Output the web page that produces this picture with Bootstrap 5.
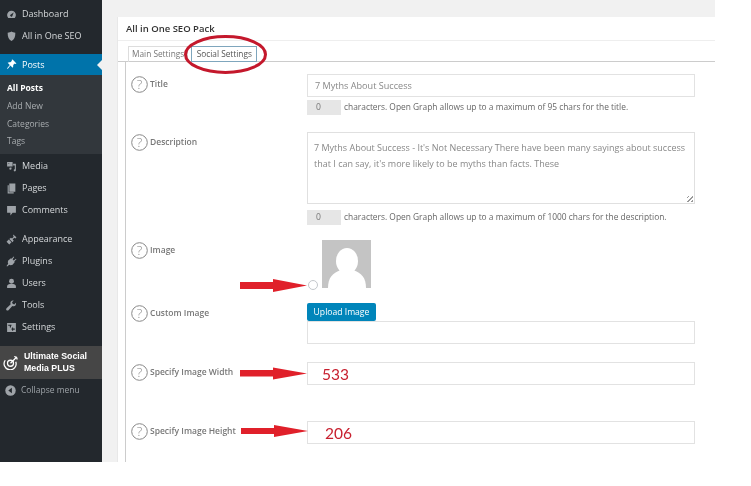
<!DOCTYPE html>
<html lang="en">
<head>
<meta charset="utf-8">
<title>All in One SEO Pack</title>
<link href="https://cdn.jsdelivr.net/npm/bootstrap@5.3.0/dist/css/bootstrap.min.css" rel="stylesheet">
<style>
html,body{margin:0;background:#fff;overflow:hidden}
body{font-family:"Open Sans",sans-serif;color:#555}
.shot{width:751px;height:486px;position:relative;background:#fff;filter:blur(.3px)}
.wpframe{width:715px;height:462px;background:#f1f1f1}
.side{width:102px;background:#23282d;padding-top:2px;flex:none}
.mitem{height:22px;display:flex;align-items:center;color:#d5d8da;font-size:9px;padding:2px 0 0 6px;gap:5px;white-space:nowrap}
.gaptop,.gaptop~.mitem{padding-top:0}
.mitem svg{width:11px;height:11px;flex:none;fill:#9ea3a8}
.mposts{background:#0073aa;color:#fff;height:21px;margin-top:8px;position:relative;padding-top:0}
.mposts svg{fill:#fff}
.mposts::after{content:"";position:absolute;right:0;top:6px;border:5px solid transparent;border-right-color:#f1f1f1;border-left:0}
.subm{background:#32373c;height:79px;padding-top:5px;margin-bottom:0}
.subi{height:17.6px;display:flex;align-items:center;padding-left:7px;font-size:8.5px;color:#a9adb0}
.subi-on{color:#fff;font-weight:700}
.gaptop{margin-top:8px}
.musm{background:#464646;height:33px;margin-top:8px;color:#fff;font:700 8.8px/11.5px "Liberation Sans",sans-serif;display:flex;align-items:center;padding-left:3px;gap:6px}
.musm svg{width:15px;height:15px;flex:none}
.mcollapse{height:22px;display:flex;align-items:center;font-size:8.5px;color:#9ea3a8;padding-left:5px;gap:5px}
.mcollapse svg{width:11px;height:11px;flex:none}
.mainc{padding:17px 0 0 15px;flex:1}
.box{background:#fff;height:445px;border-left:1px solid #e8e8e8}
.boxhead{height:24px;border-bottom:1px solid #eee;padding-left:8px;font-size:9.5px;font-weight:600;color:#333;line-height:23px}
.tabs{height:21px;padding:5px 0 0 10px;border-bottom:1px solid #ccc;gap:3px}
.tabx{height:16px;font-size:8.3px;line-height:14px;padding:0 3px;border:1px solid #ddd;border-bottom:0;color:#777;white-space:nowrap}
.tabx-on{border:1px solid #7fa6bd;color:#555;background:#fff;height:16px;padding:0 4.500px}
.panel{margin-left:7px;border-left:1px solid #ccc;padding-top:12px;height:400px}
.frow{display:flex}
.r1{height:58px}.r2{height:108px}.r3{height:63px}.r4{height:59px}.r5{height:59px}.r6{height:41px}
.lbl{width:181px;flex:none;padding:1.5px 0 0 5px;display:flex;align-items:flex-start;gap:2px;font-size:8.5px;font-weight:600;color:#777;white-space:nowrap;line-height:16px}
.lbl svg{width:17px;height:17px;flex:none}
.fld{width:388px;flex:none}
.fakein{height:23px;border:1px solid #e2e2e2;background:#fff;font-size:9.1px;line-height:21px;padding-left:7px;color:#888}
.fakearea{height:72px;border:1px solid #e0e0e0;font-size:9px;line-height:16px;padding:7px 6px;color:#888;position:relative}
.fakearea::after{content:"";position:absolute;right:1px;bottom:1px;width:6px;height:6px;background:repeating-linear-gradient(135deg,transparent 0 1px,#999 1px 2px,transparent 2px 3px)}
.cnt{display:flex;align-items:center;gap:3px;height:15px;margin-top:3px;font-size:8.4px;color:#666;white-space:nowrap}
.cntbox{width:34px;height:15px;background:#e6e6e6;font-size:8.6px;line-height:15px;padding-left:9px;color:#777;flex:none}
.r2 .cnt{margin-top:6px}
.imgrow{display:flex;align-items:flex-end;height:48px}
.radioc{width:10px;height:10px;border:1px solid #c4c8cc;border-radius:50%;background:#fff;margin:0 4px -2px 1px;flex:none}
.imgrow svg{width:49px;height:48px}
.upbtn{display:block;width:69px;height:18px;background:#0085ba;color:#fff;border:0;border-radius:2px;font-size:8.6px;font-weight:400;line-height:18px;padding:0;text-align:center}
.hand{color:#c8202f;font:400 15.5px/23px Lato,sans-serif;padding-left:14px}
.hand2{padding-left:17px}
.over{position:absolute;left:0;top:0;width:751px;height:486px;pointer-events:none}
</style>
</head>
<body>
<div class="shot">
  <div class="wpframe d-flex">
    <nav class="side">
      <div class="mitem"><svg viewBox="0 0 20 20"><path d="M10 3a8 8 0 0 0-8 8c0 2 .8 4 2 5.500h12c1.200-1.500 2-3.500 2-5.500a8 8 0 0 0-8-8zm1.500 9.500a2 2 0 1 1-2.800-2.500L14 6.500z"/></svg>Dashboard</div>
      <div class="mitem"><svg viewBox="0 0 20 20"><path d="M3 3c3 0 5-1 7-2 2 1 4 2 7 2 0 8-2 13-7 15C5 16 3 11 3 3z"/></svg>All in One SEO</div>
      <div class="mitem mposts"><svg viewBox="0 0 20 20"><path d="M12 1l7 7-2 1-1-1-3 3c.5 2 0 4-1 5l-4-4-5 6-1-1 5-6-4-4c1-1 3-1.500 5-1l3-3-1-1z"/></svg>Posts</div>
      <div class="subm">
        <div class="subi subi-on">All Posts</div>
        <div class="subi">Add New</div>
        <div class="subi">Categories</div>
        <div class="subi">Tags</div>
      </div>
      <div class="mitem"><svg viewBox="0 0 20 20"><path d="M2 2h10v8H2zM4 4v1h2V4zM13 5h5v12a2 2 0 1 1-2-2V8h-3zM4 12h6v2a2 2 0 1 1-2-2z"/></svg>Media</div>
      <div class="mitem"><svg viewBox="0 0 20 20"><path d="M6 1h11v15H6zM3 4h2v13h9v2H3z"/></svg>Pages</div>
      <div class="mitem"><svg viewBox="0 0 20 20"><path d="M2 2h16v12h-6l-4 5v-5H2z"/></svg>Comments</div>
      <div class="mitem gaptop"><svg viewBox="0 0 20 20"><path d="M13 1l6 5-2 2-2-1-3 3 2 2-2 3-6-6 3-2 2 1 3-3-1-2zM5 10l5 5-4 4-5-5z"/></svg>Appearance</div>
      <div class="mitem"><svg viewBox="0 0 20 20"><path d="M14 1l1 1-3 4 2 2 4-3 1 1-4 4 1 1-4 5c-2 1-5 1-6 0l-4 3-1-1 3-4c-1-2-1-4 0-6l5-4 1 1z"/></svg>Plugins</div>
      <div class="mitem"><svg viewBox="0 0 20 20"><circle cx="10" cy="6" r="4.500"/><path d="M2 18v-3c0-3 3-4 8-4s8 1 8 4v3z"/></svg>Users</div>
      <div class="mitem"><svg viewBox="0 0 20 20"><path d="M18 5l-3 3-3-1-1-3 3-3c-3-1-6 1-6 4 0 1 0 2 .5 2.500L1 15c-1 1-1 2.500 0 3.500s2.500 1 3.500 0l7-7.500c.5.500 1.500.500 2.500.500 3 0 5-3 4-6.500z"/></svg>Tools</div>
      <div class="mitem"><svg viewBox="0 0 20 20"><path d="M2 2h16v16H2zM4 5v2h3v3h2V7h1V5zM11 10v2h-1v2h1v2h2v-2h3v-2h-3v-2z" fill-rule="evenodd"/></svg>Settings</div>
      <div class="musm"><svg viewBox="0 0 20 20" fill="none" stroke="#fff" stroke-width="1.700"><path d="M3 7a8 8 0 1 0 14 2"/><circle cx="10" cy="11" r="4"/><path d="M10 11l8-8M15 2l3 1 1 3"/></svg><span>Ultimate Social<br>Media PLUS</span></div>
      <div class="mcollapse"><svg viewBox="0 0 20 20"><circle cx="10" cy="10" r="9.500" fill="#9ea3a8"/><path d="M12.500 5v10L6 10z" fill="#23282d"/></svg>Collapse menu</div>
    </nav>
    <main class="mainc">
      <section class="box">
        <div class="boxhead">All in One SEO Pack</div>
        <div class="tabs d-flex">
          <div class="tabx">Main Settings</div>
          <div class="tabx tabx-on">Social Settings</div>
        </div>
        <div class="panel">
          <div class="frow r1">
            <div class="lbl"><svg viewBox="0 0 17 17"><circle cx="8.500" cy="8.500" r="7.800" fill="none" stroke="#888" stroke-width="1"/><text x="8.500" y="13" text-anchor="middle" font-size="13" font-weight="300" fill="#888" font-family="Open Sans">?</text></svg><span>Title</span></div>
            <div class="fld">
              <div class="fakein">7 Myths About Success</div>
              <div class="cnt"><div class="cntbox">0</div><span>characters. Open Graph allows up to a maximum of 95 chars for the title.</span></div>
            </div>
          </div>
          <div class="frow r2">
            <div class="lbl"><svg viewBox="0 0 17 17"><circle cx="8.500" cy="8.500" r="7.800" fill="none" stroke="#888" stroke-width="1"/><text x="8.500" y="13" text-anchor="middle" font-size="13" font-weight="300" fill="#888" font-family="Open Sans">?</text></svg><span>Description</span></div>
            <div class="fld">
              <div class="fakearea">7 Myths About Success - It's Not Necessary There have been many sayings about success that I can say, it's more likely to be myths than facts. These</div>
              <div class="cnt"><div class="cntbox">0</div><span>characters. Open Graph allows up to a maximum of 1000 chars for the description.</span></div>
            </div>
          </div>
          <div class="frow r3">
            <div class="lbl"><svg viewBox="0 0 17 17"><circle cx="8.500" cy="8.500" r="7.800" fill="none" stroke="#888" stroke-width="1"/><text x="8.500" y="13" text-anchor="middle" font-size="13" font-weight="300" fill="#888" font-family="Open Sans">?</text></svg><span>Image</span></div>
            <div class="fld">
              <div class="imgrow">
                <span class="radioc"></span>
                <svg viewBox="0 0 49 48"><rect width="49" height="48" fill="#c4c4c4"/><ellipse cx="25" cy="21" rx="11" ry="13" fill="#fff"/><path d="M6 48c0-10 4-15 13-18h12c9 3 13 8 13 18z" fill="#fff"/></svg>
              </div>
            </div>
          </div>
          <div class="frow r4">
            <div class="lbl"><svg viewBox="0 0 17 17"><circle cx="8.500" cy="8.500" r="7.800" fill="none" stroke="#888" stroke-width="1"/><text x="8.500" y="13" text-anchor="middle" font-size="13" font-weight="300" fill="#888" font-family="Open Sans">?</text></svg><span>Custom Image</span></div>
            <div class="fld">
              <button type="button" class="btn upbtn">Upload Image</button>
              <div class="fakein"></div>
            </div>
          </div>
          <div class="frow r5">
            <div class="lbl"><svg viewBox="0 0 17 17"><circle cx="8.500" cy="8.500" r="7.800" fill="none" stroke="#888" stroke-width="1"/><text x="8.500" y="13" text-anchor="middle" font-size="13" font-weight="300" fill="#888" font-family="Open Sans">?</text></svg><span>Specify Image Width</span></div>
            <div class="fld"><div class="fakein hand">533</div></div>
          </div>
          <div class="frow r6">
            <div class="lbl"><svg viewBox="0 0 17 17"><circle cx="8.500" cy="8.500" r="7.800" fill="none" stroke="#888" stroke-width="1"/><text x="8.500" y="13" text-anchor="middle" font-size="13" font-weight="300" fill="#888" font-family="Open Sans">?</text></svg><span>Specify Image Height</span></div>
            <div class="fld"><div class="fakein hand hand2">206</div></div>
          </div>
        </div>
      </section>
    </main>
  </div>
  <svg class="over" viewBox="0 0 751 486">
    <ellipse cx="225.500" cy="54.500" rx="40" ry="18" fill="none" stroke="#c4182c" stroke-width="3"/>
    <g fill="#e0202a">
      <path d="M240 282h33v-3l34 6.500-34 6.500v-3h-33z"/>
      <path d="M240 370h33v-2.500l34 6-34 6v-3h-33z"/>
      <path d="M241 428h33v-3l34 6-34 6v-3h-33z"/>
    </g>
  </svg>
</div>
<script src="https://cdn.jsdelivr.net/npm/bootstrap@5.3.0/dist/js/bootstrap.bundle.min.js"></script>
</body>
</html>
